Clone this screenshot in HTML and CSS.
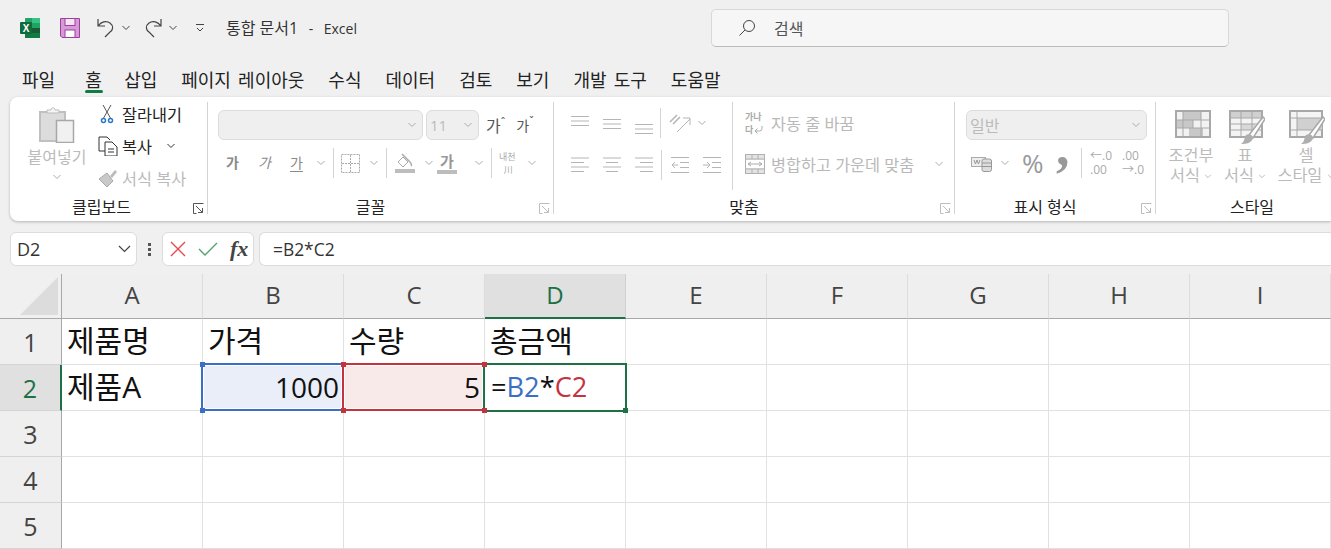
FILE: index.html
```html
<!DOCTYPE html>
<html lang="ko">
<head>
<meta charset="utf-8">
<title>통합 문서1 - Excel</title>
<link rel="stylesheet" href="styles.css">
</head>
<body>
<svg class="defs" width="0" height="0" aria-hidden="true">
  <symbol id="chev" viewBox="0 0 10 6"><path d="M1.5 1 5 4.5 8.5 1" fill="none" stroke="currentColor" stroke-width="1"/></symbol>
  <symbol id="lines-l" viewBox="0 0 20 16"><path d="M1 1.5h18M1 6h18M1 10.5h18" fill="none" stroke="currentColor"/></symbol>
  <symbol id="launch" viewBox="0 0 11 11"><path d="M.5 10.5V.5h10M3 3l6.5 6.5M9.500 5v4.500H5M.5 10.500h3" fill="none" stroke="currentColor"/></symbol>
  <symbol id="bristle" viewBox="0 0 36 34">
    <path d="M20 25 34 7l2 2-12 19z" fill="#fff" stroke="#a8a8a8" stroke-width="1.500"/>
    <path d="M12 34c5 0 11-1 12-6 0-3-4-5-7-3-2 2-1 7-5 9z" fill="#aeaeae"/>
  </symbol>
</svg>

<header class="titlebar">
  <svg class="i-excel" width="20" height="20" viewBox="0 0 20 20">
    <rect x="5" y="0" width="15" height="20" rx="1" fill="#21a366"/>
    <rect x="12" y="0" width="8" height="5" fill="#33c481"/>
    <rect x="5" y="10" width="15" height="10" fill="#107c41"/>
    <rect x="12" y="10" width="8" height="5" fill="#185c37"/>
    <rect x="0" y="4" width="12" height="12" rx="1" fill="#0f6b3b"/>
    <text x="6" y="13.500" class="xl-x">X</text>
  </svg>
  <svg class="i-save" width="20" height="20" viewBox="0 0 20 20">
    <path d="M.5.5h19v19H2L.5 18z" fill="#d69ad6" stroke="#a03ea0"/>
    <rect x="5" y=".5" width="10" height="7" fill="#f5e6f5" stroke="#a03ea0"/>
    <rect x="5" y="12" width="10" height="7.500" fill="#fff" stroke="#a03ea0"/>
  </svg>
  <svg class="i-undo" width="20" height="20" viewBox="0 0 20 20"><path d="M2 1v7h7M2 8c3-4 8-6 12-3 4 3 3 7 0 9l-5 5" fill="none" stroke="#444" stroke-width="1.200"/></svg>
  <svg class="i-chev" width="10" height="6"><use href="#chev"/></svg>
  <svg class="i-redo" width="20" height="20" viewBox="0 0 20 20"><path d="M18 1v7h-7M18 8c-3-4-8-6-12-3-4 3-3 7 0 9l5 5" fill="none" stroke="#444" stroke-width="1.200"/></svg>
  <svg class="i-chev" width="10" height="6"><use href="#chev"/></svg>
  <svg class="i-more" width="10" height="10" viewBox="0 0 10 10"><path d="M1 1.500h8M2 5l3 3 3-3" fill="none" stroke="#444"/></svg>
  <span class="doc-title"><span class="ko">통합 문서1</span><span class="sep">-</span>Excel</span>
  <div class="search">
    <svg width="18" height="18" viewBox="0 0 18 18"><circle cx="11" cy="7" r="5.500" fill="none" stroke="#444"/><path d="M7 11 1.500 16.500" stroke="#444" fill="none"/></svg>
    <span>검색</span>
  </div>
</header>

<nav class="tabs">
  <span class="tab">파일</span>
  <span class="tab tab-on">홈</span>
  <span class="tab">삽입</span>
  <span class="tab">페이지 레이아웃</span>
  <span class="tab">수식</span>
  <span class="tab">데이터</span>
  <span class="tab">검토</span>
  <span class="tab">보기</span>
  <span class="tab">개발 도구</span>
  <span class="tab">도움말</span>
</nav>

<section class="ribbon">
  <!-- clipboard -->
  <div class="group g-clip">
    <div class="clip-body">
      <div class="paste">
        <svg width="36" height="36" viewBox="0 0 36 36">
          <path d="M1 5h25v29H1z" fill="#dcdcdc" stroke="#c0c0c0" stroke-width="2"/>
          <path d="M8 6V3h4c0-3 4-3 4 0h4v3z" fill="#f5f5f5" stroke="#bbb"/>
          <rect x="17.500" y="13.500" width="17" height="22" fill="#f1f1f1" stroke="#a8a8a8" stroke-width="1.500"/>
        </svg>
        <span class="paste-label">붙여넣기</span>
        <svg class="dis-chev" width="10" height="6"><use href="#chev"/></svg>
      </div>
      <div class="clip-list">
        <div class="clip-row">
          <svg width="20" height="20" viewBox="0 0 20 20"><path d="M5 1l8 14M13 1 5 15" stroke="#555" fill="none"/><circle cx="5.500" cy="16.500" r="2" fill="none" stroke="#2a78c8" stroke-width="1.500"/><circle cx="12.500" cy="16.500" r="2" fill="none" stroke="#2a78c8" stroke-width="1.500"/></svg>
          <span>잘라내기</span>
        </div>
        <div class="clip-row">
          <svg width="20" height="20" viewBox="0 0 20 20"><path d="M7 15H1V1h8l3 3" fill="none" stroke="#333"/><path d="M7 6h7l5 5v9H7z" fill="#fff" stroke="#333"/><path d="M10 13h6M10 16h6" stroke="#333"/></svg>
          <span>복사</span>
          <svg class="copy-chev" width="10" height="6"><use href="#chev"/></svg>
        </div>
        <div class="clip-row row-dis">
          <svg width="20" height="20" viewBox="0 0 20 20"><path d="M1 11l8-6 6 8-6 6z" fill="#c9c9c9" stroke="#aaa"/><path d="M12 8l5-6 2 2-5 6z" fill="#bbb"/></svg>
          <span>서식 복사</span>
        </div>
      </div>
    </div>
    <div class="g-label g-label-clip">클립보드</div>
    <svg class="launch launch-dark" width="11" height="11"><use href="#launch"/></svg>
  </div>

  <!-- font -->
  <div class="group g-font">
    <div class="font-row1">
      <div class="sel sel-font"><svg width="10" height="6"><use href="#chev"/></svg></div>
      <div class="sel sel-size"><span>11</span><svg width="10" height="6"><use href="#chev"/></svg></div>
      <span class="ga ga-up">가<sup>ˆ</sup></span>
      <span class="ga ga-down">가<sup>ˇ</sup></span>
    </div>
    <div class="font-row2">
      <span class="fb fb-b">가</span>
      <span class="fb fb-i">가</span>
      <span class="fb fb-u">가</span>
      <svg class="ch" width="10" height="6"><use href="#chev"/></svg>
      <i class="vr"></i>
      <svg class="i20" width="19" height="19" viewBox="0 0 19 19"><path d="M.5.5h18v18H.5z" fill="none" stroke="#a8a8a8" stroke-dasharray="2 1"/><path d="M9.500 1v17M1 9.500h17" stroke="#a8a8a8" stroke-dasharray="2 1"/></svg>
      <svg class="ch" width="10" height="6"><use href="#chev"/></svg>
      <i class="vr"></i>
      <svg class="i20 fill-ico" width="20" height="20" viewBox="0 0 20 20"><path d="M3 9l5-5 5 5-5 5z" fill="none" stroke="#aaa"/><path d="M7 1l7 7c2 2 3 4 2 5" fill="none" stroke="#aaa" stroke-width="1.500"/><rect y="16" width="20" height="4" fill="#bdbdbd"/></svg>
      <svg class="ch" width="10" height="6"><use href="#chev"/></svg>
      <span class="fc">가</span>
      <svg class="ch" width="10" height="6"><use href="#chev"/></svg>
      <i class="vr"></i>
      <span class="wrap-dir">내천<br>&nbsp;&nbsp;川</span>
      <svg class="ch" width="10" height="6"><use href="#chev"/></svg>
    </div>
    <div class="g-label">글꼴</div>
    <svg class="launch" width="11" height="11"><use href="#launch"/></svg>
  </div>

  <!-- alignment -->
  <div class="group g-align">
    <div class="align-grid">
      <div class="align-left">
        <div class="al-row">
          <svg class="al" width="20" height="16"><use href="#lines-l"/></svg>
          <svg class="al al-mid" width="20" height="16"><use href="#lines-l"/></svg>
          <svg class="al al-bot" width="20" height="16"><use href="#lines-l"/></svg>
          <i class="vr vr-al"></i>
          <svg class="orient" width="22" height="22" viewBox="0 0 22 22"><path d="M8 20 21 7M14 6h7v7" fill="none" stroke="#b5b5b5"/><path d="M1 10l7-7M4 12l7-7" stroke="#b5b5b5" stroke-width="1.500"/></svg>
          <svg class="ch" width="10" height="6"><use href="#chev"/></svg>
        </div>
        <div class="al-row">
          <svg class="al" width="20" height="18" viewBox="0 0 20 18"><path d="M1 2h18M1 6.500h13M1 11h18M1 15.500h13" fill="none" stroke="#b5b5b5"/></svg>
          <svg class="al" width="20" height="18" viewBox="0 0 20 18"><path d="M1 2h18M4 6.500h12M1 11h18M4 15.500h12" fill="none" stroke="#b5b5b5"/></svg>
          <svg class="al" width="20" height="18" viewBox="0 0 20 18"><path d="M1 2h18M6 6.500h13M1 11h18M6 15.500h13" fill="none" stroke="#b5b5b5"/></svg>
          <i class="vr vr-al"></i>
          <svg class="ind" width="20" height="18" viewBox="0 0 20 18"><path d="M1 1.500h18M10 6.500h9M10 11.500h9M1 16.500h18M8 9H2M5 6 2 9l3 3" fill="none" stroke="#b5b5b5"/></svg>
          <svg class="ind ind2" width="20" height="18" viewBox="0 0 20 18"><path d="M1 1.500h18M10 6.500h9M10 11.500h9M1 16.500h18M1 9h6M5 6l3 3-3 3" fill="none" stroke="#b5b5b5"/></svg>
        </div>
      </div>
      <div class="align-right">
        <div class="ar-row">
          <span class="wrap-ico">
            <span class="wrap-l1">가나</span>
            <span class="wrap-l2">다<svg width="9" height="9" viewBox="0 0 9 9"><path d="M8 1v2.500a2.500 2.500 0 0 1-2.500 2.500H1M3.500 3.500 1 6l2.500 2.500" fill="none" stroke="#aaa"/></svg></span>
          </span>
          <span>자동 줄 바꿈</span>
        </div>
        <div class="ar-row">
          <svg width="20" height="20" viewBox="0 0 20 20"><rect x=".5" y=".5" width="19" height="19" fill="#e4e4e4" stroke="#b0b0b0"/><path d="M1 5h18M1 15h18M7 1v4M13 1v4M7 15v4M13 15v4" stroke="#b0b0b0"/><rect x="1" y="6" width="18" height="8" fill="#fff"/><path d="M3 10h14M6 8l-3 2 3 2M14 8l3 2-3 2" fill="none" stroke="#aaa"/></svg>
          <span>병합하고 가운데 맞춤</span>
          <svg class="merge-chev" width="10" height="6"><use href="#chev"/></svg>
        </div>
      </div>
    </div>
    <div class="g-label">맞춤</div>
    <svg class="launch" width="11" height="11"><use href="#launch"/></svg>
  </div>

  <!-- number -->
  <div class="group g-num">
    <div class="sel sel-num"><span>일반</span><svg width="10" height="6"><use href="#chev"/></svg></div>
    <div class="num-row">
      <svg width="21" height="18" viewBox="0 0 21 18"><rect x=".5" y="3.500" width="14" height="9" fill="#eee" stroke="#aaa"/><path d="M3 6l1.500 4L6 6l1.500 4L9 6" fill="none" stroke="#999"/><rect x="11" y="5" width="9.500" height="12.500" rx="2" fill="#ddd" stroke="#999"/><path d="M11 9h9M11 12.500h9" stroke="#999"/></svg>
      <svg class="ch ch-num" width="10" height="6"><use href="#chev"/></svg>
      <span class="pct">%</span>
      <span class="comma">,</span>
      <i class="vr vr-num"></i>
      <span class="dec"><b>←.0</b><b>.00</b></span>
      <span class="dec"><b>.00</b><b>→.0</b></span>
    </div>
    <div class="g-label">표시 형식</div>
    <svg class="launch" width="11" height="11"><use href="#launch"/></svg>
  </div>

  <!-- styles -->
  <div class="g-style">
    <div class="style-body">
      <div class="style-item s1">
        <svg width="36" height="28" viewBox="0 0 36 28" class="ico-cond"><rect x="1" y="1" width="34" height="26" fill="#f2f2f2" stroke="#a8a8a8" stroke-width="2"/><rect x="8" y="2" width="18" height="8" fill="#c8c8c8"/><rect x="2" y="10" width="16" height="8" fill="#c8c8c8"/><rect x="14" y="18" width="14" height="8" fill="#c8c8c8"/><path d="M1 10h34M1 18h34M8 1v26M18 10v8M26 1v26" stroke="#a8a8a8" fill="none"/></svg>
        <span>조건부<br>서식 <svg width="8" height="5"><use href="#chev"/></svg></span>
      </div>
      <div class="style-item s2">
        <svg width="36" height="34" viewBox="0 0 36 34"><rect x="1" y="1" width="32" height="26" fill="#f4f4f4" stroke="#a8a8a8" stroke-width="2"/><rect x="2" y="2" width="30" height="6" fill="#d0d0d0"/><rect x="12" y="14" width="14" height="6" fill="#d8d8d8"/><path d="M1 8h32M1 14h32M1 20h32M12 1v26M23 1v26" stroke="#a8a8a8" fill="none"/><use href="#bristle"/></svg>
        <span>표<br>서식 <svg width="8" height="5"><use href="#chev"/></svg></span>
      </div>
      <div class="style-item s3">
        <svg width="36" height="34" viewBox="0 0 36 34"><rect x="1" y="1" width="32" height="26" fill="#f4f4f4" stroke="#a8a8a8" stroke-width="2"/><rect x="8" y="8" width="25" height="12" fill="#d0d0d0"/><path d="M1 8h32M8 1v26M1 20h32" stroke="#a8a8a8" fill="none"/><use href="#bristle"/></svg>
        <span>셀<br>스타일 <svg width="8" height="5"><use href="#chev"/></svg></span>
      </div>
    </div>
    <div class="g-label g-label-style">스타일</div>
  </div>
</section>

<section class="fbar">
  <div class="namebox"><span>D2</span>
    <svg width="13" height="8" viewBox="0 0 13 8"><path d="M1 1l5.500 5.500L12 1" fill="none" stroke="#444" stroke-width="1.200"/></svg>
  </div>
  <div class="dots"><i></i><i></i><i></i></div>
  <div class="fx-box">
    <svg width="16" height="16" viewBox="0 0 16 16"><path d="M1 1l14 14M15 1 1 15" stroke="#e5484d" stroke-width="1.400" fill="none"/></svg>
    <svg width="20" height="14" viewBox="0 0 20 14"><path d="M1 7l6 6L19 1" stroke="#4ea66d" stroke-width="1.400" fill="none"/></svg>
    <span class="fx">fx</span>
  </div>
  <div class="finput">=B2*C2</div>
</section>

<section class="sheet">
  <div class="corner"><svg width="38" height="38" viewBox="0 0 38 38"><path d="M38 0v38H0z" fill="#dcdcdc"/></svg></div>
  <div class="ch-h">A</div><div class="ch-h">B</div><div class="ch-h">C</div>
  <div class="ch-h ch-on">D</div>
  <div class="ch-h">E</div><div class="ch-h">F</div><div class="ch-h">G</div><div class="ch-h">H</div><div class="ch-h">I</div>

  <div class="rh">1</div>
  <div class="cell">제품명</div><div class="cell">가격</div><div class="cell">수량</div><div class="cell">총금액</div>
  <div class="cell"></div><div class="cell"></div><div class="cell"></div><div class="cell"></div><div class="cell"></div>

  <div class="rh rh-on">2</div>
  <div class="cell">제품A</div>
  <div class="cell num ref ref-b">1000<i class="h tl"></i><i class="h tr"></i><i class="h bl"></i><i class="h br"></i></div>
  <div class="cell num ref ref-c">5<i class="h tl"></i><i class="h tr"></i><i class="h bl"></i><i class="h br"></i></div>
  <div class="cell ref ref-d">=<span class="c-b">B2</span>*<span class="c-c">C2</span><i class="h br"></i></div>
  <div class="cell"></div><div class="cell"></div><div class="cell"></div><div class="cell"></div><div class="cell"></div>

  <div class="rh">3</div>
  <div class="cell"></div><div class="cell"></div><div class="cell"></div><div class="cell"></div><div class="cell"></div><div class="cell"></div><div class="cell"></div><div class="cell"></div><div class="cell"></div>
  <div class="rh">4</div>
  <div class="cell"></div><div class="cell"></div><div class="cell"></div><div class="cell"></div><div class="cell"></div><div class="cell"></div><div class="cell"></div><div class="cell"></div><div class="cell"></div>
  <div class="rh">5</div>
  <div class="cell"></div><div class="cell"></div><div class="cell"></div><div class="cell"></div><div class="cell"></div><div class="cell"></div><div class="cell"></div><div class="cell"></div><div class="cell"></div>
</section>
</body>
</html>
```
FILE: styles.css
```css
* { box-sizing: border-box; }
html, body { margin: 0; height: 549px; overflow: hidden; }
body {
  background: #f0f0f0;
  color: #222;
  font-family: "Open Sans", "Noto Sans CJK KR", sans-serif;
  font-size: 14px;
  width: 1331px;
}
i { font-style: normal; }
.defs { position: absolute; }
svg { display: block; flex: none; }

/* title bar */
.titlebar { height: 56px; display: flex; align-items: center; padding-left: 20px; }
.xl-x { font: 700 10px "Liberation Sans", sans-serif; fill: #fff; text-anchor: middle; }
.i-save { margin-left: 20px; }
.i-undo { margin-left: 16px; }
.i-chev { margin-left: 5px; color: #444; }
.i-redo { margin-left: 12px; }
.i-more { margin-left: 17px; }
.doc-title { margin-left: 21px; font-size: 14px; line-height: 20px; color: #333; white-space: nowrap; width: 485px; }
.ko { font-size: 16px; }
.sep { margin: 0 10.500px; }
.search {
  width: 518px; height: 38px; background: #f6f6f6; border: 1px solid #d8d8d8; border-bottom-color: #bbb;
  border-radius: 5px; display: flex; align-items: center; padding-left: 26px; gap: 18px; font-size: 16px; color: #555;
}

/* tabs */
.tabs { height: 41px; padding-left: 22px; display: flex; gap: 24px; align-items: flex-start; padding-top: 11px; }
.tab { font-size: 18px; line-height: 26px; color: #222; white-space: nowrap; word-spacing: 2.500px; }
.tab-on { margin-left: 6px; margin-right: -3px; }
.tab-on::after { content: ""; display: block; height: 3px; width: 18px; background: #107c41; border-radius: 2px; margin-top: -3px; }

/* ribbon */
.ribbon {
  margin-left: 10px; height: 124px; background: #fff; border-radius: 8px 0 0 8px;
  box-shadow: 0 1px 3px rgba(0,0,0,.25); display: flex; overflow: hidden; padding-top: 5px;
}
.group { position: relative; height: 112px; border-right: 1px solid #d4d4d4; flex: none; }
.g-label { position: absolute; left: 0; right: 20px; top: 95px; text-align: center; font-size: 16px; line-height: 20px; color: #222; white-space: nowrap; }
.g-label-clip { right: 14px; }
.launch { position: absolute; right: 3px; bottom: 0; color: #bdbdbd; }
.launch-dark { color: #555; }
.ch { color: #aaa; flex: none; }
.vr { display: block; width: 1px; height: 30px; background: #d4d4d4; flex: none; }

.g-clip { width: 198px; }
.clip-body { display: flex; padding-left: 17px; }
.paste { width: 60px; display: flex; flex-direction: column; align-items: center; padding-top: 5px; color: #bbb; }
.paste-label { font-size: 16px; line-height: 20px; margin-top: 4px; white-space: nowrap; }
.dis-chev { margin-top: 7px; color: #aaa; }
.clip-list { margin-left: 11px; margin-top: -4px; }
.clip-row { display: flex; align-items: center; gap: 4px; height: 32px; font-size: 16.300px; color: #222; white-space: nowrap; }
.copy-chev { margin-left: 10px; color: #333; }
.row-dis { color: #bbb; }

.g-font { width: 346px; padding: 8px 0 0 10px; }
.font-row1 { display: flex; align-items: center; }
.sel { height: 30px; background: #efefef; border: 1px solid #dcdcdc; border-radius: 6px; display: flex; align-items: center; justify-content: space-between; padding: 0 5px 0 3px; color: #bbb; font-size: 15px; flex: none; }
.sel svg { color: #aaa; }
.sel-font { width: 205px; justify-content: flex-end; }
.sel-size { width: 53px; margin-left: 3px; }
.ga { color: #555; white-space: nowrap; }
.ga sup { font-size: 11px; line-height: 0; }
.ga-up { margin-left: 7px; font-size: 16px; }
.ga-down { margin-left: 11px; font-size: 14px; }
.font-row2 { display: flex; align-items: center; height: 30px; margin-top: 8px; padding-left: 8px; }
.fb { width: 32px; font-size: 14px; color: #8a8a8a; line-height: 18px; text-align: left; flex: none; }
.fb-b { font-weight: 700; }
.fb-i { font-style: italic; }
.fb-u { width: 26px; text-decoration: underline; text-underline-offset: 3px; }
.font-row2 .vr { margin: 0 7px; }
.i20 { margin-right: 9px; }
.fill-ico { margin-left: 1px; }
.fc { width: 20px; margin-left: 3px; margin-right: 17px; font-size: 15px; font-weight: 700; line-height: 17px; color: #999; text-align: center; border-bottom: 4px solid #bdbdbd; flex: none; }
.wrap-dir { width: 24px; margin-right: 4px; font-size: 9px; line-height: 13px; color: #aaa; white-space: nowrap; flex: none; }

.g-align { width: 401px; padding-left: 16px; }
.align-grid { display: flex; height: 84px; }
.align-left { width: 162px; padding-top: 6px; }
.al-row { display: flex; align-items: center; height: 30px; margin-bottom: 12px; color: #b5b5b5; }
.al { margin-right: 12px; color: #b5b5b5; }
.al-mid { margin-top: 6px; }
.al-bot { margin-top: 16px; margin-right: 11px; }
.vr-al { margin-right: 8px; margin-left: -5px; }
.orient { margin-right: 6px; }
.ind { margin-right: 12px; }
.ind2 { margin-right: 0; }
.align-right { border-left: 1px solid #d4d4d4; padding: 4px 0 0 12px; height: 88px; color: #b9b9b9; font-size: 16.300px; white-space: nowrap; }
.ar-row { display: flex; align-items: center; height: 34px; gap: 6px; margin-bottom: 7px; }
.wrap-ico { width: 20px; display: flex; flex-direction: column; font-size: 9px; line-height: 13px; font-weight: 700; color: #aaa; flex: none; }
.wrap-l2 { display: flex; align-items: center; gap: 1px; }
.merge-chev { margin-left: 14px; color: #aaa; }

.g-num { width: 201px; padding: 8px 0 0 11px; }
.sel-num { width: 181px; padding: 0 5px 0 3px; font-size: 16px; }
.num-row { display: flex; align-items: center; height: 30px; margin-top: 8px; padding-left: 5px; color: #aaa; }
.ch-num { margin-left: 8px; }
.pct { font-size: 26px; margin-left: 12px; width: 34px; color: #999; line-height: 30px; }
.comma { font: 700 54px/20px "Liberation Serif", serif; color: #999; width: 25px; margin-top: -32px; }
.vr-num { margin-right: 8px; }
.dec { display: flex; flex-direction: column; font-size: 12px; line-height: 14px; width: 32px; color: #aaa; flex: none; white-space: nowrap; }
.dec b { font-weight: 400; }

.g-style { position: relative; flex: 1; height: 112px; }
.style-body { display: flex; padding: 8px 0 0 7px; }
.style-item { display: flex; flex-direction: column; align-items: center; color: #bbb; font-size: 16.300px; line-height: 20px; text-align: center; white-space: nowrap; flex: none; }
.s1 { width: 60px; }
.s2 { width: 48px; }
.s3 { width: 72px; }
.style-item > span { margin-top: 1px; }
.s1 > span, .s2 > span { margin-left: -4px; }
.s3 > span { margin-left: -2px; }
.ico-cond { margin-bottom: 6px; }
.style-item span svg { display: inline-block; vertical-align: middle; color: #aaa; }
.g-label-style { right: auto; left: 61px; width: 70px; }

/* formula bar */
.fbar { margin-top: 11px; height: 34px; display: flex; padding-left: 10px; }
.namebox { width: 127px; background: #fff; border: 1px solid #dcdcdc; border-radius: 6px; display: flex; align-items: center; justify-content: space-between; padding: 0 5px 0 6px; font-size: 18px; color: #333; }
.dots { width: 25px; display: flex; flex-direction: column; align-items: center; justify-content: center; gap: 2px; }
.dots i { width: 3px; height: 3px; background: #555; }
.fx-box { width: 92px; background: #fff; border: 1px solid #dcdcdc; border-radius: 6px; display: flex; align-items: center; gap: 12px; padding-left: 7px; }
.fx { font: italic 700 22px/20px "Liberation Serif", serif; color: #444; }
.finput { flex: 1; margin-left: 5px; background: #fff; border: 1px solid #dcdcdc; border-right: 0; border-radius: 6px 0 0 6px; font-size: 17.400px; line-height: 32px; padding-left: 13px; color: #333; }

/* sheet */
.sheet { margin-top: 8px; display: grid; grid-template-columns: 62px repeat(9, 141px); grid-template-rows: 45px repeat(5, 46px); background: #fff; width: 1331px; }
.corner { background: #f0f0f0; border-right: 1px solid #a8a8a8; border-bottom: 1px solid #a8a8a8; display: flex; align-items: flex-end; justify-content: flex-end; padding: 0 3px 3px 0; }
.ch-h { background: #efefef; border-right: 1px solid #dcdcdc; border-bottom: 1px solid #a8a8a8; color: #444; font-size: 24px; text-align: center; line-height: 42px; }
.ch-on { background: #e0e0e0; color: #1e7145; border-bottom: 2px solid #1e7145; border-right-color: #d0d0d0; }
.rh { background: #efefef; border-right: 1px solid #a8a8a8; border-bottom: 1px solid #d4d4d4; color: #444; font-size: 25px; text-align: center; line-height: 46px; }
.rh-on { background: #e0e0e0; color: #1e7145; border-right: 2px solid #1e7145; }
.cell { position: relative; border-right: 1px solid #e1e1e1; border-bottom: 1px solid #e1e1e1; font-size: 30px; line-height: 44px; padding: 0 3px 0 5px; color: #111; white-space: nowrap; }
.num { font-size: 28px; text-align: right; padding-right: 5px; }
.ref { border: 0; }
.ref::before { content: ""; position: absolute; inset: -2px 0 0 -2px; border: 2px solid; box-shadow: inset 0 0 0 1px #fff; pointer-events: none; z-index: 1; }
.ref-b { background: #e9eef8; }
.ref-b::before { border-color: #3a6fc4; }
.ref-c { background: #f9eaea; }
.ref-c::before { border-color: #c4343f; }
.ref-d { font-size: 27.200px; padding-left: 6px; }
.ref-d::before { border-color: #1e7145; inset: -2px -1px -1px -2px; }
.h { position: absolute; width: 5px; height: 5px; z-index: 2; }
.ref-b .h { background: #3a6fc4; }
.ref-c .h { background: #c4343f; }
.ref-d .h { background: #1e7145; }
.tl { left: -3px; top: -3px; }
.tr { right: -2px; top: -3px; }
.bl { left: -3px; bottom: -2px; }
.br { right: -2px; bottom: -2px; }
.c-b { color: #3a6fc4; }
.c-c { color: #c4343f; }
```
